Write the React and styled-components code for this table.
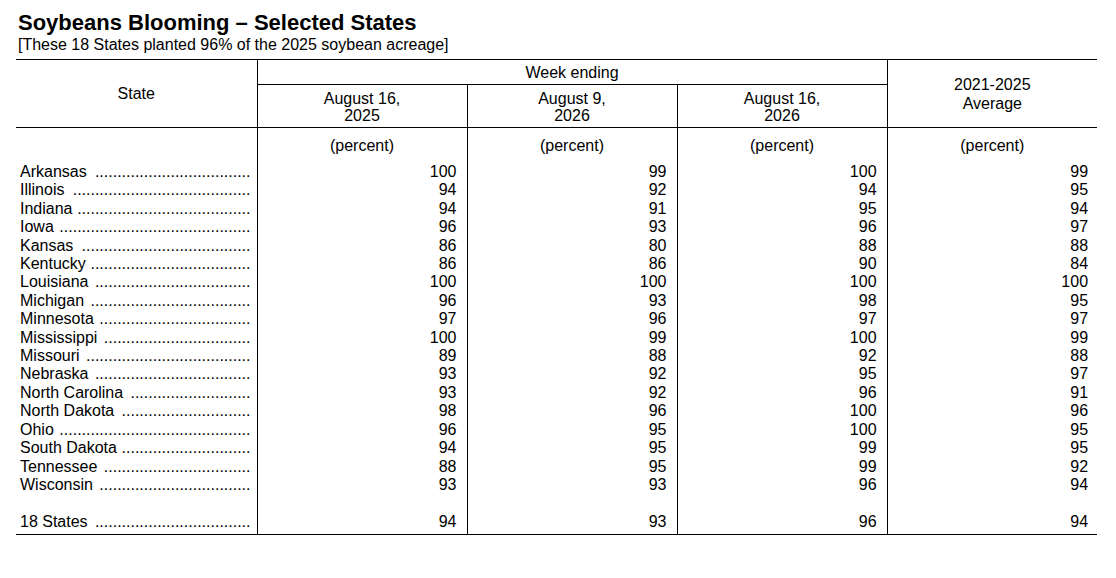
import React from "react";
import styled, { createGlobalStyle } from "styled-components";

const Global = createGlobalStyle`
  html, body { margin: 0; padding: 0; background: #fff; }
  body { font-family: "Liberation Sans", Arial, sans-serif; color: #000; }
`;

const Page = styled.div`
  padding: 10px 0 0 16px;
  width: 1100px;
`;

const Title = styled.h1`
  margin: 0 0 0 2px;
  font-size: 22px;
  line-height: 25px;
  font-weight: 700;
`;

const Subtitle = styled.div`
  margin: 1px 0 0 2px;
  font-size: 16px;
  line-height: 18.4px;
`;

const Table = styled.table`
  margin-top: 5px;
  width: 1081px;
  border-collapse: collapse;
  table-layout: fixed;
  border-top: 1px solid #000;
  border-bottom: 1px solid #000;
  font-size: 16px;
`;

const HeadCell = styled.th`
  padding: ${(p) => p.$pad || "0"};
  font-weight: 400;
  text-align: center;
  vertical-align: middle;
  line-height: ${(p) => p.$lh || "17px"};
  height: ${(p) => p.$h || "auto"};
  border-left: ${(p) => (p.$first ? "none" : "1px solid #000")};
  border-bottom: ${(p) => (p.$under ? "1px solid #000" : "none")};
`;

const HeadRow = styled.tr`
  border-bottom: 1px solid #000;
`;

const Cell = styled.td`
  padding: ${(p) => p.$pad || "0"};
  padding-right: ${(p) => p.$pr || "0"};
  line-height: 18.4px;
  height: 18.4px;
  white-space: nowrap;
  vertical-align: top;
  text-align: ${(p) => p.$align || "right"};
  border-left: ${(p) => (p.$first ? "none" : "1px solid #000")};
`;

const StateWrap = styled.div`
  display: flex;
  align-items: baseline;
  justify-content: space-between;
  padding: 0 6px 0 4px;
`;

const Name = styled.span`
  flex: none;
`;

const Leader = styled.span`
  flex: none;
  white-space: nowrap;
`;

/* Arial / Liberation Sans advance widths (units per 1000 em) */
const W = {
  " ": 278, A: 667, C: 722, D: 722, I: 278, K: 667, L: 556, M: 833, N: 722,
  O: 778, S: 667, T: 611, W: 944, a: 556, b: 556, c: 500, d: 556, e: 556,
  g: 556, h: 556, i: 222, k: 500, l: 222, n: 556, o: 556, p: 556, r: 333,
  s: 500, t: 278, u: 556, w: 722, y: 500, 1: 556, 8: 556,
};
const textWidth = (s) =>
  [...s].reduce((sum, ch) => sum + (W[ch] ?? 556), 0) * 16 / 1000;
const CONTENT = 241 - 4 - 6;
const DOT = 0.278 * 16;
const dotsFor = (name) =>
  ".".repeat(Math.floor((CONTENT - textWidth(name) - 5) / DOT));

const rows = [
  ["Arkansas", 100, 99, 100, 99],
  ["Illinois", 94, 92, 94, 95],
  ["Indiana", 94, 91, 95, 94],
  ["Iowa", 96, 93, 96, 97],
  ["Kansas", 86, 80, 88, 88],
  ["Kentucky", 86, 86, 90, 84],
  ["Louisiana", 100, 100, 100, 100],
  ["Michigan", 96, 93, 98, 95],
  ["Minnesota", 97, 96, 97, 97],
  ["Mississippi", 100, 99, 100, 99],
  ["Missouri", 89, 88, 92, 88],
  ["Nebraska", 93, 92, 95, 97],
  ["North Carolina", 93, 92, 96, 91],
  ["North Dakota", 98, 96, 100, 96],
  ["Ohio", 96, 95, 100, 95],
  ["South Dakota", 94, 95, 99, 95],
  ["Tennessee", 88, 95, 99, 92],
  ["Wisconsin", 93, 93, 96, 94],
];

const total = ["18 States", 94, 93, 96, 94];

function DataRow({ row, pad }) {
  return (
    <tr>
      <Cell $first $align="left" $pad={pad}>
        <StateWrap>
          <Name>{row[0]}</Name>
          <Leader>{dotsFor(row[0])}</Leader>
        </StateWrap>
      </Cell>
      {row.slice(1).map((v, i) => (
        <Cell key={i} $pad={pad} $pr={i === 3 ? "9px" : "10px"}>
          {v}
        </Cell>
      ))}
    </tr>
  );
}

const PCT = "8.5px 0 7.7px";

export default function App() {
  return (
    <>
      <Global />
      <Page>
        <Title>Soybeans Blooming – Selected States</Title>
        <Subtitle>[These 18 States planted 96% of the 2025 soybean acreage]</Subtitle>
        <Table>
          <colgroup>
            <col style={{ width: 241 }} />
            <col style={{ width: 210 }} />
            <col style={{ width: 210 }} />
            <col style={{ width: 210 }} />
            <col style={{ width: 210 }} />
          </colgroup>
          <thead>
            <tr>
              <HeadCell $first rowSpan={2}>State</HeadCell>
              <HeadCell colSpan={3} $under $h="24px">Week ending</HeadCell>
              <HeadCell rowSpan={2} $lh="19px">
                2021-2025
                <br />
                Average
              </HeadCell>
            </tr>
            <HeadRow>
              <HeadCell $h="40px" $pad="2px 0 0">
                August 16,
                <br />
                2025
              </HeadCell>
              <HeadCell $h="40px" $pad="2px 0 0">
                August 9,
                <br />
                2026
              </HeadCell>
              <HeadCell $h="40px" $pad="2px 0 0">
                August 16,
                <br />
                2026
              </HeadCell>
            </HeadRow>
          </thead>
          <tbody>
            <tr>
              <Cell $first $pad={PCT} />
              <Cell $align="center" $pad={PCT}>(percent)</Cell>
              <Cell $align="center" $pad={PCT}>(percent)</Cell>
              <Cell $align="center" $pad={PCT}>(percent)</Cell>
              <Cell $align="center" $pad={PCT}>(percent)</Cell>
            </tr>
            {rows.map((r) => (
              <DataRow key={r[0]} row={r} />
            ))}
            <tr>
              <Cell $first />
              <Cell />
              <Cell />
              <Cell />
              <Cell />
            </tr>
            <DataRow row={total} pad="0 0 2.7px" />
          </tbody>
        </Table>
      </Page>
    </>
  );
}
